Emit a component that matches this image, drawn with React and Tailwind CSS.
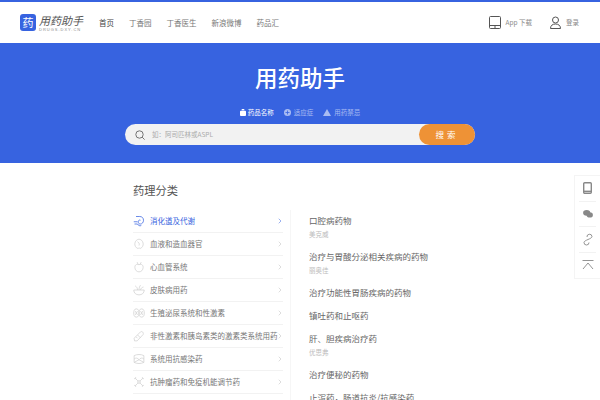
import React from "react";
import { ChevronRight } from "lucide-react";

const font = "font-['Noto_Sans_CJK_SC','Liberation_Sans',sans-serif]";

const navLinks = ["首页", "丁香园", "丁香医生", "新浪微博", "药品汇"];

const categoryIcons = [
  <path key="a" d="M4 2h5c3 0 5 2 5 5s-2 5-4 5c-2 0-3-1-3-3s2-3 3-2M1 9h5M2 12h4c1 2 3 3 5 2" />,
  <path key="b" d="M8 1.500C5 2 3 4 2.500 7c-.5 3 1 6 4 7M8 1.500c3 .5 5 2.500 5.500 5.500.5 3-1 6-4 7M6 5c2 1 3 3 2 5M6.500 14c1-.5 2-1 3 0" />,
  <path key="c" d="M8 5C5 3.500 2.500 5 2.500 8.500S5 14.500 8 14.500s5.500-2.500 5.500-6S11 3.500 8 5zM5.500 1.500L7 5M11 1.500L9 5" />,
  <path key="d" d="M1 8h14c0 4-3 6.500-7 6.500S1 12 1 8zM6 8C6 5 4.500 3.500 3 2.500M8 8c0-3 1-5 2-6.500M10 8c0-2 2-3.500 4-4" />,
  <path key="e" d="M4.500 2.500c3 0 3.500 3 3.500 5.500s-.5 5.500-3.500 5.500S1 11 1 8s.5-5.500 3.500-5.500zM11.500 2.500c-3 0-3.500 3-3.500 5.500s.5 5.500 3.500 5.500S15 11 15 8s-.5-5.500-3.500-5.500zM3 5.500l3 5M6 5.500l-3 5M10 5.500l3 5M13 5.500l-3 5" />,
  <path key="f" d="M2 14.500L1.500 11 10 2.500c2-1.500 4.500 1 3.500 3.500l-8 8.500zM6 6.500l4 4M4 9l2 2" />,
  <path key="g" d="M1.500 3.500C5 1.500 11 1.500 14.500 3.500v9C11 14.500 5 14.500 1.500 12.500zM1.500 8C4 6 6 6.500 8 9c2-2.500 4-3 6.500-1M1.500 12.500L8 9l6.500 3.500" />,
  <path key="h" d="M3.500 3.500l3 3h3l3-3M3.500 12.500l3-3h3l3 3M6.500 6.500v3M9.500 6.500v3M1.500 3.500h2v-2M14.500 3.500h-2v-2M1.500 12.500h2v2M14.500 12.500h-2v2" />,
];

const categories = [
  "消化道及代谢",
  "血液和造血器官",
  "心血管系统",
  "皮肤病用药",
  "生殖泌尿系统和性激素",
  "非性激素和胰岛素类的激素类系统用药",
  "系统用抗感染药",
  "抗肿瘤药和免疫机能调节药",
];

const subCategories = [
  { name: "口腔病药物", sub: "美克威" },
  { name: "治疗与胃酸分泌相关疾病的药物", sub: "丽奥佳" },
  { name: "治疗功能性胃肠疾病的药物" },
  { name: "镇吐药和止呕药" },
  { name: "肝、胆疾病治疗药", sub: "优思弗" },
  { name: "治疗便秘的药物" },
  { name: "止泻药，肠道抗炎/抗感染药" },
];

const Header = () => (
  <header className="h-[43px] shrink-0 border-t-2 border-[#3763e0] bg-white flex items-center pl-[20px] pr-[21px]">
    <div className="w-[16px] h-[17px] rounded-[3px] bg-[#3763e0] flex items-center justify-center text-white text-[11px] leading-none">
      药
    </div>
    <div className="ml-[3px] w-[45px]">
      <div className="text-[11px] leading-[14px] italic text-[#555] whitespace-nowrap">用药助手</div>
      <div className="text-[4px] leading-[5px] tracking-[1px] text-[#888] font-['Liberation_Sans',sans-serif] whitespace-nowrap">
        DRUGS.DXY.CN
      </div>
    </div>
    <nav className="flex gap-[15px] ml-[15px] text-[7.5px] text-[#777]">
      {navLinks.map((item, i) => (
        <a key={item} className={i === 0 ? "text-[#444]" : ""}>
          {item}
        </a>
      ))}
    </nav>
    <div className="ml-auto flex items-center">
      <svg width="12" height="13" viewBox="0 0 12 13" fill="none" stroke="#555" strokeWidth="1">
        <rect x="0.500" y="0.500" width="11" height="12" rx="1" />
        <path d="M0.500 9.500h11M6 9.500v3" />
      </svg>
      <span className="ml-[5px] text-[6.5px] text-[#888]">App 下载</span>
      <svg className="ml-[17px]" width="13" height="13" viewBox="0 0 13 13" fill="none" stroke="#555" strokeWidth="1">
        <circle cx="6.500" cy="4" r="3" />
        <path d="M1.500 12.500c0-3 2-4.500 5-4.500s5 1.500 5 4.500z" />
      </svg>
      <span className="ml-[4px] text-[6.5px] text-[#888]">登录</span>
    </div>
  </header>
);

const Hero = () => (
  <section className="h-[120px] shrink-0 bg-[#3763e0] flex flex-col items-center">
    <h1 className="mt-[17px] text-[22.5px] leading-[34px] font-medium text-white">用药助手</h1>
    <div className="mt-[13px] flex items-center gap-[10px] text-[6.5px] leading-[10px]">
      <span className="flex items-center gap-[2px] text-white">
        <svg width="6" height="7" viewBox="0 0 7 8" fill="#fff">
          <path d="M1 2h5a1 1 0 0 1 1 1v4a1 1 0 0 1-1 1H1a1 1 0 0 1-1-1V3a1 1 0 0 1 1-1zM2 0h3v1.400H2z" />
        </svg>
        药品名称
      </span>
      <span className="flex items-center gap-[3px] text-[#a9bcf2]">
        <svg width="7" height="7" viewBox="0 0 7 7">
          <circle cx="3.500" cy="3.500" r="3.500" fill="#a9bcf2" />
          <path d="M1.500 3.500h4M3.500 1.500v4" stroke="#3763e0" strokeWidth="0.800" />
        </svg>
        适应症
      </span>
      <span className="flex items-center gap-[3px] text-[#a9bcf2]">
        <svg width="8" height="7" viewBox="0 0 8 7" fill="#a9bcf2">
          <path d="M4 0l4 7H0z" />
        </svg>
        用药禁忌
      </span>
    </div>
    <div className="mt-[7px] w-[350px] h-[21px] rounded-full bg-[#f2f2f2] flex items-center">
      <svg className="ml-[10px]" width="10" height="10" viewBox="0 0 10 10" fill="none" stroke="#666" strokeWidth="0.900">
        <circle cx="4.500" cy="4.500" r="3.700" />
        <path d="M7.200 7.200L9.600 9.600" />
      </svg>
      <span className="ml-[7px] text-[6.5px] text-[#aaa]">如：阿司匹林或ASPL</span>
      <button className="ml-auto w-[56px] h-[21px] rounded-full bg-[#ee9236] text-white text-[8.5px] tracking-[3px]">
        搜索
      </button>
    </div>
  </section>
);

const CategoryList = () => (
  <ul className="w-[150px] shrink-0">
    {categories.map((item, i) => (
      <li
        key={item}
        className={`h-[23px] flex items-center border-b border-[#f2f2f2] text-[7.5px] whitespace-nowrap ${
          i === 0 ? "text-[#3763e0]" : "text-[#777]"
        }`}
      >
        <svg
          className="shrink-0"
          width="12"
          height="12"
          viewBox="0 0 16 16"
          fill="none"
          stroke={i === 0 ? "#3763e0" : "#d0d0d0"}
          strokeWidth="1"
        >
          {categoryIcons[i]}
        </svg>
        <span className="ml-[5px] w-[127px] shrink-0">{item}</span>
        <ChevronRight
          size={8}
          strokeWidth={1.500}
          className={`shrink-0 -ml-[1px] ${i === 0 ? "text-[#3763e0]" : "text-[#bbb]"}`}
        />
      </li>
    ))}
  </ul>
);

const SubList = () => (
  <div className="ml-[18px] pt-[2px]">
    {subCategories.map((item) => (
      <div key={item.name} className="mb-[7px]">
        <div className="text-[8.5px] leading-[16px] text-[#666] whitespace-nowrap">{item.name}</div>
        {item.sub && <div className="text-[6.5px] leading-[13px] text-[#bbb]">{item.sub}</div>}
      </div>
    ))}
  </div>
);

const SideBar = () => (
  <aside className="absolute right-0 top-[175px] w-[26px] h-[104px] bg-white border border-r-0 border-[#f4f4f4] flex flex-col items-center">
    <div className="h-[26px] w-[17px] flex items-center justify-center border-b border-[#f2f2f2]">
      <svg width="9" height="12" viewBox="0 0 9 12" fill="none" stroke="#888" strokeWidth="1.400">
        <rect x="0.700" y="0.700" width="7.600" height="10.600" rx="1" />
        <path d="M0.700 9.300h7.600" />
      </svg>
    </div>
    <div className="h-[26px] w-[17px] flex items-center justify-center border-b border-[#f2f2f2]">
      <svg width="10" height="8" viewBox="0 0 11 9" fill="#888">
        <ellipse cx="4" cy="3.200" rx="4" ry="3.200" />
        <ellipse cx="7.500" cy="5.500" rx="3.500" ry="3" />
      </svg>
    </div>
    <div className="h-[26px] w-[17px] flex items-center justify-center border-b border-[#f2f2f2]">
      <svg width="10" height="13" viewBox="0 0 10 13" fill="none" stroke="#888" strokeWidth="0.900">
        <path d="M4 4A2.500 2.500 0 0 1 9 3.500C9 6 1 7 1 9.500A2.500 2.500 0 0 0 6 9.500" />
      </svg>
    </div>
    <div className="h-[26px] w-[17px] flex items-center justify-center">
      <svg width="12" height="10" viewBox="0 0 12 10" fill="none" stroke="#888" strokeWidth="0.900">
        <path d="M0.500 0.500h11M1 9l5-6 5 6" />
      </svg>
    </div>
  </aside>
);

const App = () => {
  return (
    <div className={`relative w-[600px] h-[400px] overflow-hidden bg-white flex flex-col ${font}`}>
      <Header />
      <Hero />
      <main className="w-[334px] ml-[133px] pt-[19px]">
        <h2 className="text-[11.25px] leading-[16px] text-[#555]">药理分类</h2>
        <div className="mt-[12px] flex">
          <CategoryList />
          <div className="ml-[7px] w-px h-[200px] bg-[#f6f6f6]" />
          <SubList />
        </div>
      </main>
      <SideBar />
    </div>
  );
};

export default App;
